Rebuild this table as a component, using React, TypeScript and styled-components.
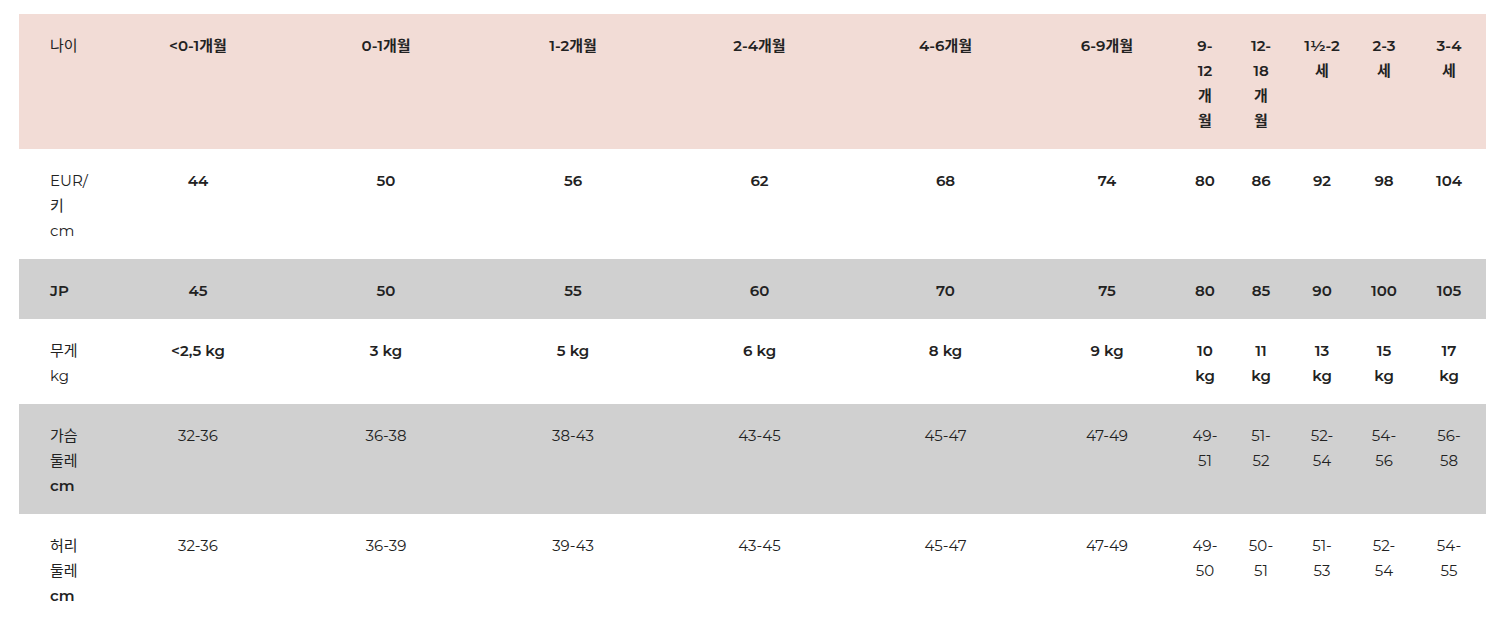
import styled, { createGlobalStyle } from "styled-components";

const GlobalStyle = createGlobalStyle`
    body {
        margin: 0;
        background: #fff;
        font-family: "Montserrat", Inter, "Noto Sans CJK KR", sans-serif;
        color: #222;
    }
`;

type Cell = string[];
type Row = {
    label: { lines: string[]; bold?: boolean[] };
    values: Cell[];
    bold: boolean;
    tone: "pink" | "white" | "gray";
};

const widths = [85, 188, 188, 186, 187, 185, 138, 58, 54, 68, 56, 74];

const rows: Row[] = [
    {
        label: { lines: ["나이"] },
        tone: "pink",
        bold: true,
        values: [
            ["<0-1개월"],
            ["0-1개월"],
            ["1-2개월"],
            ["2-4개월"],
            ["4-6개월"],
            ["6-9개월"],
            ["9-", "12", "개", "월"],
            ["12-", "18", "개", "월"],
            ["1½-2", "세"],
            ["2-3", "세"],
            ["3-4", "세"],
        ],
    },
    {
        label: { lines: ["EUR/", "키", "cm"] },
        tone: "white",
        bold: true,
        values: ["44", "50", "56", "62", "68", "74", "80", "86", "92", "98", "104"].map((v) => [v]),
    },
    {
        label: { lines: ["JP"], bold: [true] },
        tone: "gray",
        bold: true,
        values: ["45", "50", "55", "60", "70", "75", "80", "85", "90", "100", "105"].map((v) => [v]),
    },
    {
        label: { lines: ["무게", "kg"] },
        tone: "white",
        bold: true,
        values: [
            ["<2,5 kg"],
            ["3 kg"],
            ["5 kg"],
            ["6 kg"],
            ["8 kg"],
            ["9 kg"],
            ["10", "kg"],
            ["11", "kg"],
            ["13", "kg"],
            ["15", "kg"],
            ["17", "kg"],
        ],
    },
    {
        label: { lines: ["가슴", "둘레", "cm"], bold: [false, false, true] },
        tone: "gray",
        bold: false,
        values: [
            ["32-36"],
            ["36-38"],
            ["38-43"],
            ["43-45"],
            ["45-47"],
            ["47-49"],
            ["49-", "51"],
            ["51-", "52"],
            ["52-", "54"],
            ["54-", "56"],
            ["56-", "58"],
        ],
    },
    {
        label: { lines: ["허리", "둘레", "cm"], bold: [false, false, true] },
        tone: "white",
        bold: false,
        values: [
            ["32-36"],
            ["36-39"],
            ["39-43"],
            ["43-45"],
            ["45-47"],
            ["47-49"],
            ["49-", "50"],
            ["50-", "51"],
            ["51-", "53"],
            ["52-", "54"],
            ["54-", "55"],
        ],
    },
];

const tones = {
    pink: "#f2dcd6",
    white: "#ffffff",
    gray: "#d0d0d0",
};

export default function App() {
    return (
        <Page>
            <GlobalStyle />
            <SizeTable>
                <colgroup>
                    {widths.map((w, i) => (
                        <col key={i} style={{ width: w }} />
                    ))}
                </colgroup>
                <tbody>
                    {rows.map((row, r) => (
                        <TableRow key={r} $tone={row.tone}>
                            <LabelCell>
                                {row.label.lines.map((line, i) => (
                                    <Line key={i} $bold={!!row.label.bold?.[i]}>
                                        {line}
                                    </Line>
                                ))}
                            </LabelCell>
                            {row.values.map((cell, c) => (
                                <ValueCell key={c}>
                                    {cell.map((line, i) => (
                                        <Line key={i} $bold={row.bold}>
                                            {line}
                                        </Line>
                                    ))}
                                </ValueCell>
                            ))}
                        </TableRow>
                    ))}
                </tbody>
            </SizeTable>
        </Page>
    );
}

const Page = styled.div`
    padding: 14px 13px 0 19px;
`;

const SizeTable = styled.table`
    width: 1467px;
    table-layout: fixed;
    border-collapse: collapse;
    border-spacing: 0;
`;

const TableRow = styled.tr<{ $tone: "pink" | "white" | "gray" }>`
    background: ${(p) => tones[p.$tone]};
`;

const BaseCell = styled.td`
    padding: 19px 0 16px;
    vertical-align: top;
    font-size: 15px;
    line-height: 25px;
    color: #222;
    white-space: nowrap;
`;

const LabelCell = styled(BaseCell)`
    padding-left: 31px;
    text-align: left;
`;

const ValueCell = styled(BaseCell)`
    text-align: center;
`;

const Line = styled.div<{ $bold: boolean }>`
    font-weight: ${(p) => (p.$bold ? 600 : 400)};
`;
